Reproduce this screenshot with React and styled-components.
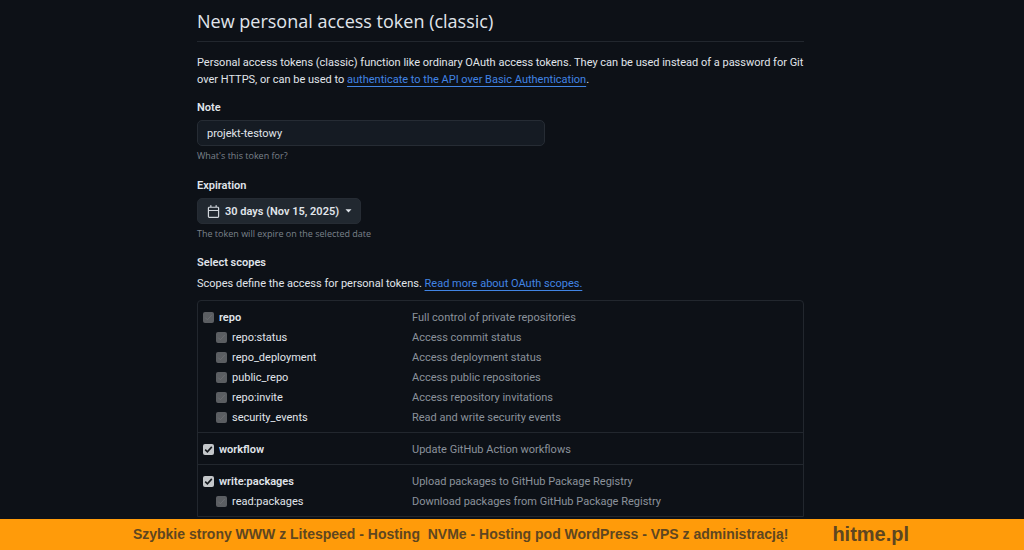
import { useState } from "react";
import styled, { createGlobalStyle } from "styled-components";

const scopeGroups = [
  [
    { name: "repo", text: "Full control of private repositories", locked: true },
    { name: "repo:status", text: "Access commit status", child: true },
    { name: "repo_deployment", text: "Access deployment status", child: true },
    { name: "public_repo", text: "Access public repositories", child: true },
    { name: "repo:invite", text: "Access repository invitations", child: true },
    { name: "security_events", text: "Read and write security events", child: true },
  ],
  [{ name: "workflow", text: "Update GitHub Action workflows" }],
  [
    { name: "write:packages", text: "Upload packages to GitHub Package Registry" },
    { name: "read:packages", text: "Download packages from GitHub Package Registry", child: true },
  ],
];

const ScopeItem = ({ scope }) => {
  const [checked, setChecked] = useState(true);
  return (
    <ScopeRow>
      <ScopeLabel $child={scope.child}>
        <CheckWrap>
          <Checkbox
            type="checkbox"
            checked={checked}
            disabled={scope.locked || scope.child}
            onChange={() => setChecked(!checked)}
          />
          <CheckMark viewBox="0 0 11 11" aria-hidden="true">
            <path d="M2.2 5.6l2.2 2.2 4.4-4.9" />
          </CheckMark>
        </CheckWrap>
        {scope.name}
      </ScopeLabel>
      <ScopeText>{scope.text}</ScopeText>
    </ScopeRow>
  );
};

export default function App() {
  const [note, setNote] = useState("projekt-testowy");

  return (
    <Page>
      <GlobalStyle />
      <Content>
        <Title>New personal access token (classic)</Title>
        <Intro>
          Personal access tokens (classic) function like ordinary OAuth access tokens. They can be used instead of a
          password for Git over HTTPS, or can be used to{" "}
          <Link href="#basic-auth">authenticate to the API over Basic Authentication</Link>.
        </Intro>

        <Field>
          <FieldLabel htmlFor="note">Note</FieldLabel>
          <NoteInput id="note" type="text" value={note} onChange={(e) => setNote(e.target.value)} />
          <Hint>What's this token for?</Hint>
        </Field>

        <Field>
          <FieldLabel htmlFor="expiration">Expiration</FieldLabel>
          <SelectBox>
            <CalendarIcon viewBox="0 0 16 16" aria-hidden="true">
              <path d="M4.75 0a.75.75 0 0 1 .75.75V2h5V.75a.75.75 0 0 1 1.5 0V2h1.25c.966 0 1.75.784 1.75 1.75v10.5A1.75 1.75 0 0 1 13.25 16H2.75A1.75 1.75 0 0 1 1 14.25V3.75C1 2.784 1.784 2 2.75 2H4V.75A.75.75 0 0 1 4.75 0ZM2.5 7.5v6.75c0 .138.112.25.25.25h10.5a.25.25 0 0 0 .25-.25V7.5Zm10.75-4H2.75a.25.25 0 0 0-.25.25V6h11V3.75a.25.25 0 0 0-.25-.25Z" />
            </CalendarIcon>
            <Select id="expiration">
              <option>30 days (Nov 15, 2025)</option>
            </Select>
            <Caret viewBox="0 0 8 4" aria-hidden="true">
              <path d="M0.6 0h6.8L4 3.8z" />
            </Caret>
          </SelectBox>
          <Hint>The token will expire on the selected date</Hint>
        </Field>

        <Subtitle>Select scopes</Subtitle>
        <ScopesIntro>
          Scopes define the access for personal tokens. <Link href="#scopes">Read more about OAuth scopes.</Link>
        </ScopesIntro>

        <ScopeBox>
          {scopeGroups.map((group) => (
            <ScopeGroup key={group[0].name}>
              {group.map((scope) => (
                <ScopeItem key={scope.name} scope={scope} />
              ))}
            </ScopeGroup>
          ))}
        </ScopeBox>
      </Content>

      <Banner>
        <BannerText>
          Szybkie strony WWW z Litespeed - Hosting&nbsp; NVMe - Hosting pod WordPress - VPS z administracją!
        </BannerText>
        <BannerBrand>hitme.pl</BannerBrand>
      </Banner>
    </Page>
  );
}

const GlobalStyle = createGlobalStyle`
  * {
    box-sizing: border-box;
  }
  body {
    margin: 0;
    background: #0d1117;
    color: #e0e5eb;
    font-family: Roboto, "Open Sans", sans-serif;
    font-size: 11px;
    line-height: 17px;
  }
`;

const Page = styled.div`
  display: flex;
  flex-direction: column;
  height: 100vh;
`;

const Content = styled.main`
  flex: 1;
  min-height: 0;
  overflow: hidden;
  padding: 8px 220px 0 197px;
`;

const Title = styled.h1`
  margin: 0 0 12px;
  padding-bottom: 7px;
  border-bottom: 1px solid #22272e;
  font-family: "Open Sans", sans-serif;
  font-size: 18px;
  font-weight: 400;
  line-height: 26px;
`;

const Intro = styled.p`
  margin: 0 0 11px;
`;

const Link = styled.a`
  color: #4184e4;
  text-decoration: underline;
  text-underline-offset: 3px;
`;

const Field = styled.div`
  display: flex;
  flex-direction: column;
  align-items: flex-start;
  margin-bottom: 14px;
`;

const FieldLabel = styled.label`
  margin-bottom: 4px;
  font-weight: 600;
`;

const NoteInput = styled.input`
  width: 348px;
  max-width: 100%;
  height: 26px;
  padding: 0 9px;
  border: 1px solid #262c34;
  border-radius: 5px;
  background: #151b23;
  color: inherit;
  font: inherit;
`;

const Hint = styled.p`
  margin: 3px 0 0;
  color: #7b828b;
  font-family: "Open Sans", sans-serif;
  font-size: 9px;
  line-height: 14px;
`;

const SelectBox = styled.div`
  display: flex;
  align-items: center;
  height: 26px;
  padding: 0 8px 0 9px;
  border: 1px solid #262c34;
  border-radius: 5px;
  background: #212830;
`;

const CalendarIcon = styled.svg`
  width: 13px;
  height: 13px;
  margin-right: 5px;
  fill: #d0d5db;
`;

const Select = styled.select`
  appearance: none;
  padding: 0;
  border: 0;
  background: transparent;
  color: inherit;
  font: inherit;
  font-weight: 600;
`;

const Caret = styled.svg`
  width: 7px;
  height: 4px;
  margin-left: 5px;
  fill: #e0e5eb;
`;

const Subtitle = styled.h2`
  margin: 0 0 5px;
  font-size: 11px;
  font-weight: 600;
  line-height: 15px;
`;

const ScopesIntro = styled.p`
  margin: 0 0 8px;
`;

const ScopeBox = styled.div`
  border: 1px solid #22272e;
  border-radius: 4px 4px 0 0;
`;

const ScopeGroup = styled.div`
  padding: 6px 5px 5px;

  & + & {
    border-top: 1px solid #22272e;
  }
`;

const ScopeRow = styled.div`
  display: grid;
  grid-template-columns: 209px 1fr;
  align-items: center;
  height: 20px;
`;

const ScopeLabel = styled.label`
  display: flex;
  align-items: center;
  gap: 5px;
  padding-left: ${(props) => (props.$child ? "13px" : "0")};
  font-weight: ${(props) => (props.$child ? 400 : 600)};
`;

const ScopeText = styled.span`
  color: #8b929b;
`;

const CheckWrap = styled.span`
  display: grid;
  width: 11px;
  height: 11px;

  & > * {
    grid-area: 1 / 1;
  }
`;

const Checkbox = styled.input`
  appearance: none;
  width: 11px;
  height: 11px;
  margin: 0;
  border-radius: 2px;
  background: #c4c7ca;

  &:disabled {
    background: #5b5e62;
  }
`;

const CheckMark = styled.svg`
  width: 11px;
  height: 11px;
  fill: none;
  stroke: #14181d;
  stroke-width: 1.6;
  pointer-events: none;

  input:disabled + & {
    stroke: #6c6e72;
    stroke-width: 1;
  }

  input:not(:checked) + & {
    visibility: hidden;
  }
`;

const Banner = styled.footer`
  display: flex;
  align-items: center;
  justify-content: center;
  gap: 44px;
  height: 31px;
  padding-left: 18px;
  background: #ff9b0a;
  color: #5e4620;
  font-family: "Liberation Sans", Arial, sans-serif;
  font-weight: 700;
  white-space: nowrap;
`;

const BannerText = styled.span`
  font-size: 14px;
`;

const BannerBrand = styled.span`
  font-size: 20px;
`;
